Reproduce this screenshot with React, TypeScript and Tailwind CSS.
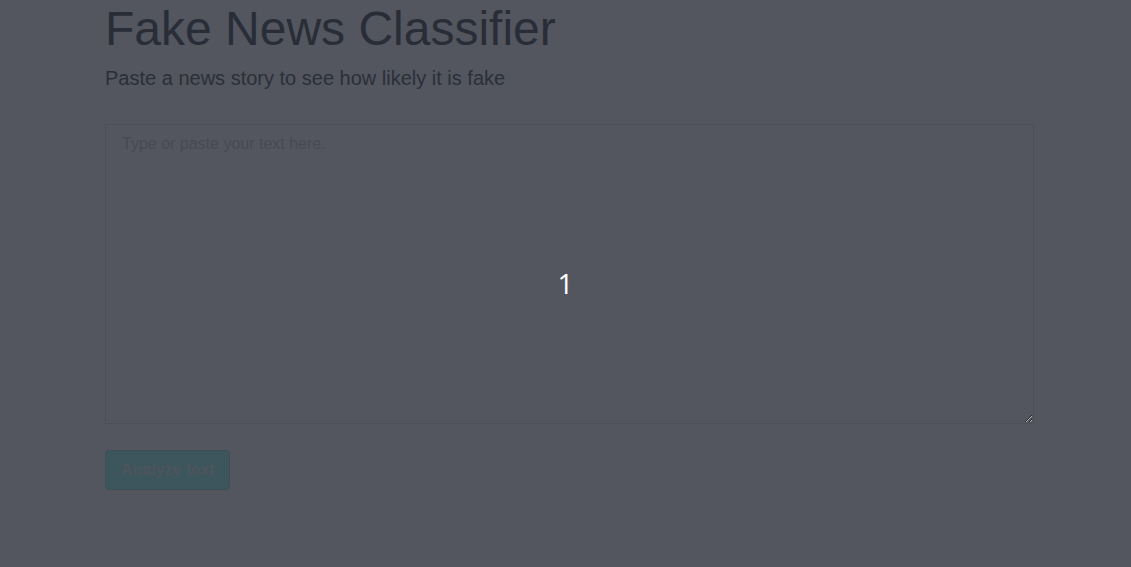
import React from 'react';

export default function App() {
  return (
    <div
      className="relative w-[1131px] h-[567px] overflow-hidden bg-[#53565f]"
      style={{ fontFamily: '"Liberation Sans", Arial, sans-serif' }}
    >
      <div className="pl-[105px] w-[1034px]">
        <h1 className="text-[48px] leading-[1.2] text-[#292d37] mb-[5px]">Fake News Classifier</h1>
        <p className="text-[20px] leading-[1.5] text-[#2b2f38]">Paste a news story to see how likely it is fake</p>

        <textarea
          className="mt-[31px] block w-[929px] h-[300px] border border-dotted border-[#464952] bg-transparent px-4 py-[7px] text-[16px] text-[#2b2f38] placeholder:text-[#474a53] outline-none resize-y"
          placeholder="Type or paste your text here."
        />

        <button
          disabled
          className="mt-[26px] h-[40px] px-[15px] rounded-[4px] border border-[#3e4f57] bg-[#3d565d] text-[16px] font-bold text-[#4d545c]"
        >
          Analyze text
        </button>
      </div>

      <div className="absolute inset-0 flex items-center justify-center pb-[2px] pointer-events-none">
        <span className="text-[28px] text-white" style={{ fontFamily: '"Open Sans", sans-serif' }}>1</span>
      </div>
    </div>
  );
}
